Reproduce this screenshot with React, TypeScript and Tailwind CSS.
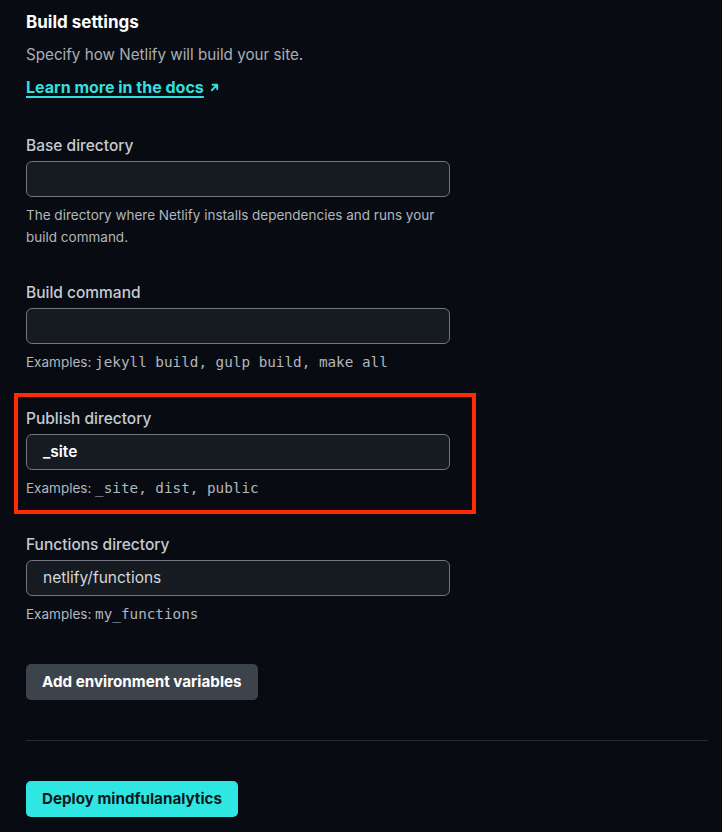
import { ReactNode } from "react";

type FieldProps = {
    label: string
    value?: string
    bold?: boolean
    help: ReactNode
    highlight?: boolean
    example?: boolean
}

const mono = "font-['DejaVu_Sans_Mono','Liberation_Mono',monospace] text-[14.3px] leading-[20px]";

const Field = ({ label, value, bold, help, highlight, example }: FieldProps) => {
    return (
        <div className="relative flex flex-col w-[424px]">
            {highlight && (
                <div className="absolute -left-[12px] -right-[26px] -top-[16px] -bottom-[14px] border-[4px] border-[#ff2b06] pointer-events-none" />
            )}
            <label className="text-[15.5px] leading-[20px] font-medium text-[#c6cad1]">{label}</label>
            <div className="mt-[5px] h-[36px] rounded-[6px] border border-[#70757e] bg-[#161a21] px-[16px] flex items-center">
                <span className={`text-[15.5px] ${bold ? "font-semibold text-white" : "text-[#d4d7dc]"}`}>{value}</span>
            </div>
            <div className={`mt-[7px] text-[13.5px] leading-[22px] text-[#b2b6bd] ${example ? "h-[23px]" : ""}`}>{help}</div>
        </div>
    );
};

const App = () => {
    return (
        <div className="min-h-[832px] w-full bg-[#080c12] font-['Inter','Noto_Sans',sans-serif] pl-[26px] pr-[14px] pt-[10px] pb-[15px]">
            <h2 className="text-[17px] leading-[24px] font-bold text-white">Build settings</h2>
            <p className="mt-[10px] text-[15.2px] leading-[22px] text-[#a9aeb6]">Specify how Netlify will build your site.</p>
            <a href="#" className="mt-[10px] inline-flex items-center gap-[5px] text-[16px] leading-[22px] font-bold text-[#34dfdc]">
                <span className="underline underline-offset-[3px] decoration-[1.5px]">Learn more in the docs</span>
                <svg width="11" height="11" viewBox="0 0 12 12" fill="none" stroke="currentColor" strokeWidth="2" strokeLinecap="round" strokeLinejoin="round">
                    <path d="M3 9 L9 3 M4 3 H9 V8" />
                </svg>
            </a>

            <div className="mt-[37px] flex flex-col gap-[35px]">
                <Field
                    label="Base directory"
                    help={<>The directory where Netlify installs dependencies and runs your<br />build command.</>}
                />
                <Field
                    label="Build command"
                    example
                    help={<>Examples: <span className={mono}>jekyll build, gulp build, make all</span></>}
                />
                <Field
                    label="Publish directory"
                    value="_site"
                    bold
                    highlight
                    example
                    help={<>Examples: <span className={mono}>_site, dist, public</span></>}
                />
                <Field
                    label="Functions directory"
                    value="netlify/functions"
                    example
                    help={<>Examples: <span className={mono}>my_functions</span></>}
                />
            </div>

            <button className="mt-[38px] h-[36px] px-[16px] rounded-[5px] bg-[#3d434b] text-[15.2px] font-bold text-white">
                Add environment variables
            </button>

            <div className="mt-[40px] h-px bg-[#272b32]" />

            <button className="mt-[40px] h-[36px] px-[16px] rounded-[5px] bg-[#30e6e2] text-[15.2px] font-bold text-[#0a1a1c]">
                Deploy mindfulanalytics
            </button>
        </div>
    );
};

export default App
